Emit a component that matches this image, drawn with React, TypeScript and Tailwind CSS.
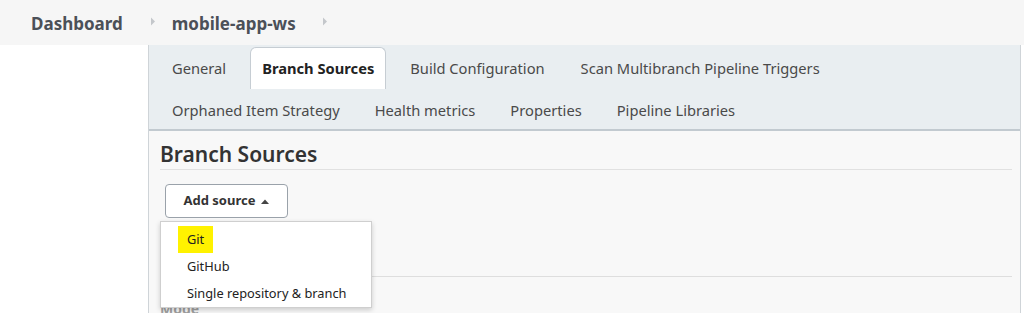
import React from "react";

const Caret = ({ cls }: { cls: string }) => (
  <svg width="6" height="9" viewBox="0 0 6 9" className={cls}>
    <path d="M1 0.5 L5 4.5 L1 8.5 Z" fill="#c4c7cb" />
  </svg>
);

export default function App() {
  const row1 = ["General", "Branch Sources", "Build Configuration", "Scan Multibranch Pipeline Triggers"];
  const row2 = ["Orphaned Item Strategy", "Health metrics", "Properties", "Pipeline Libraries"];
  return (
    <div
      className="w-[1024px] h-[313px] overflow-hidden bg-white"
      style={{ fontFamily: '"Noto Sans", "Open Sans", Arial, sans-serif' }}
    >
      <div className="h-[45px] bg-[#f6f6f6] flex items-center pt-[3px] pl-[31px] font-bold text-[17px] text-[#4b5058]">
        <span>Dashboard</span>
        <Caret cls="ml-[27px] mr-[16px] mt-[-6px]" />
        <span>mobile-app-ws</span>
        <Caret cls="ml-[26px] mt-[-6px]" />
      </div>
      <div className="flex h-[268px]">
        <div className="w-[148px] shrink-0 bg-white" />
        <div className="w-[873px] shrink-0 border-l border-r border-[#cfd4d8] flex flex-col">
          <div className="bg-[#e9eef1] border-b-2 border-[#c2cad0] pl-[11px] pt-[2px] text-[14.7px] text-[#4a4a4a]">
            <div className="flex gap-[12px] h-[42px]">
              {row1.map((t, i) =>
                i === 1 ? (
                  <div
                    key={t}
                    className="px-[11px] flex items-center bg-white border border-b-0 border-[#c6cdd3] rounded-t-[6px] font-bold text-[#222]"
                  >
                    {t}
                  </div>
                ) : (
                  <div key={t} className="px-[12px] flex items-center">
                    {t}
                  </div>
                )
              )}
            </div>
            <div className="flex gap-[11px] h-[40px] pt-[2px]">
              {row2.map((t) => (
                <div key={t} className="px-[12px] flex items-center">
                  {t}
                </div>
              ))}
            </div>
          </div>
          <div className="flex-1 bg-[#f8f8f8] pl-[11px] pr-[8px] relative">
            <div className="pt-[10px] pb-[1px] border-b border-[#e1e1e1] text-[21px] font-semibold text-[#333] leading-[27px]">
              Branch Sources
            </div>
            <div className="pt-[14px] pl-[5px]">
              <button className="w-[123px] h-[34px] bg-white border-[1.5px] border-[#9aa2aa] rounded-[4px] flex items-center justify-center gap-[6px] text-[13px] font-bold text-[#333]">
                Add source
                <svg width="8" height="5" viewBox="0 0 8 5">
                  <path d="M0 5 L4 0.5 L8 5 Z" fill="#444" />
                </svg>
              </button>
            </div>
            <div className="h-[59px] border-b border-[#dedede]" />
            <div className="pt-[22px] text-[14px] leading-[20px] font-bold text-[#a0a0a0]">Mode</div>
            <div className="absolute left-[11px] top-[90px] w-[212px] h-[87px] bg-white border border-[#cfcfcf] shadow-[0_2px_5px_rgba(0,0,0,0.18)] text-[12.8px] text-[#222] pt-[4px]">
              <div className="h-[27px] flex items-center pl-[17px]">
                <span className="bg-[#fff200] h-[27px] px-[9px] flex items-center">Git</span>
              </div>
              <div className="h-[27px] flex items-center pl-[26px]">GitHub</div>
              <div className="h-[27px] flex items-center pl-[26px]">Single repository &amp; branch</div>
            </div>
          </div>
        </div>
      </div>
    </div>
  );
}
